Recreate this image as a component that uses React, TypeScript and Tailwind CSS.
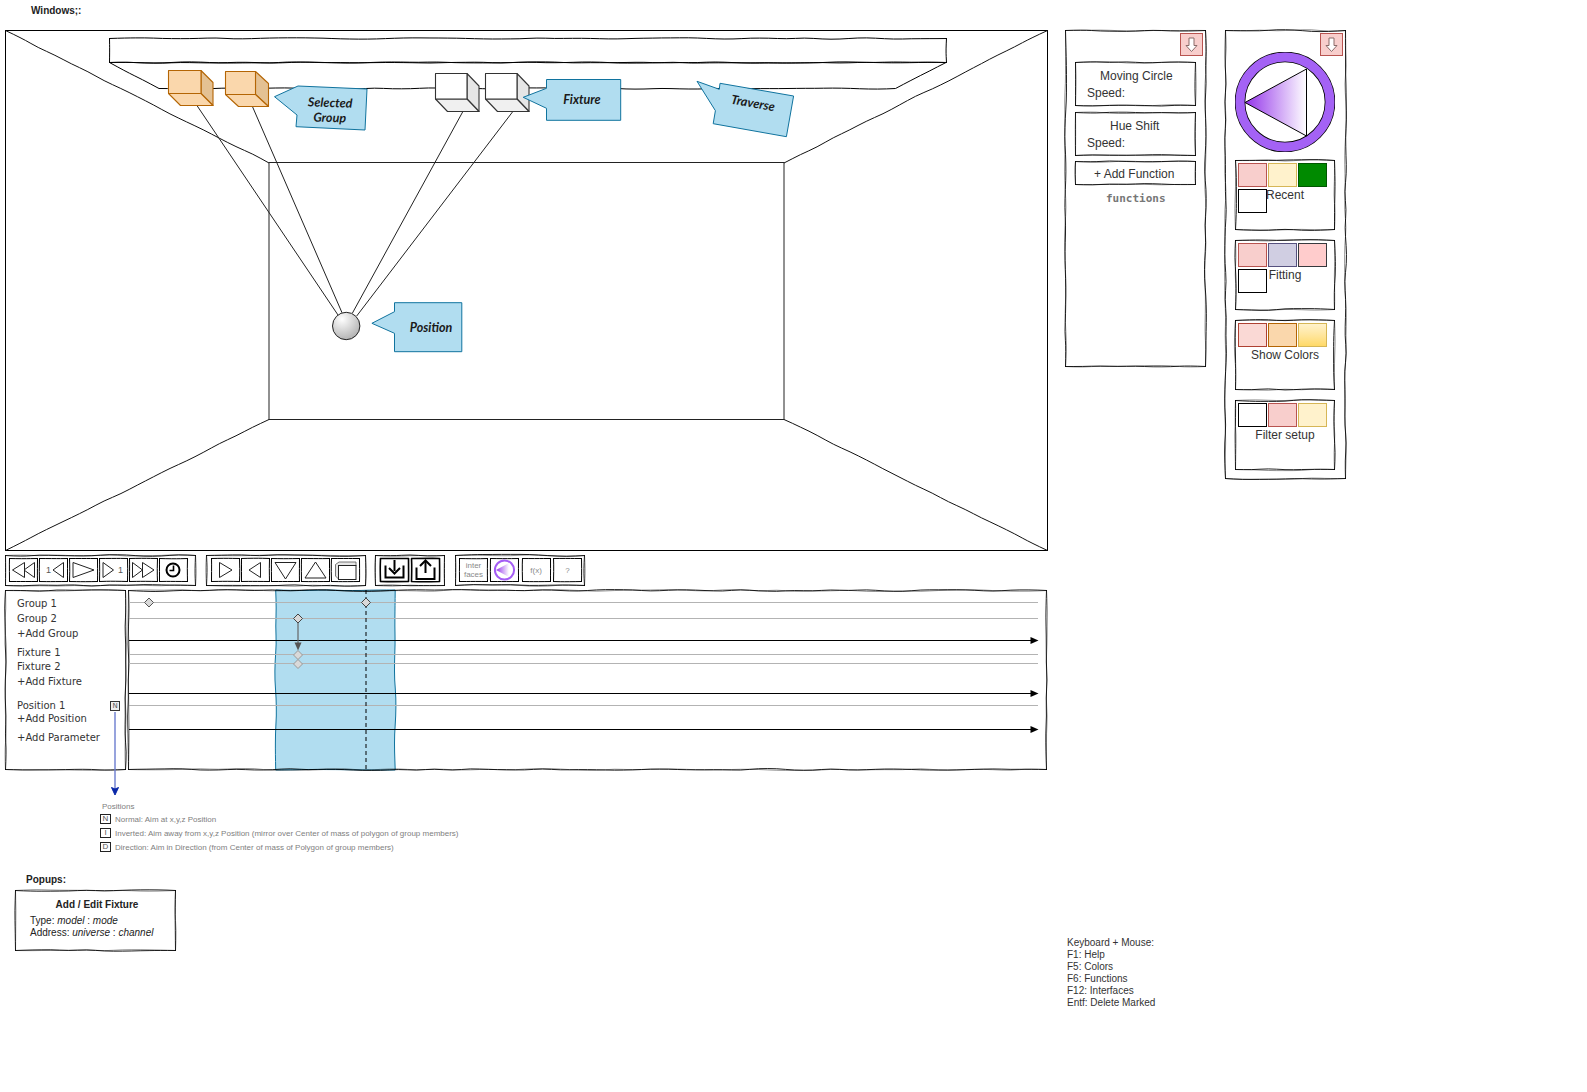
import type { ReactNode } from 'react';

// Little seeded generator so the sketchy lines come out the same on every render.
function makeRandom(seed: number) {
  let s = seed * 9301 + 49297;
  return () => {
    s = (s * 9301 + 49297) % 233280;
    return s / 233280 - 0.5;
  };
}

function wobble(x1: number, y1: number, x2: number, y2: number, seed: number, amp = 1.2, step = 18) {
  const rand = makeRandom(seed);
  const len = Math.hypot(x2 - x1, y2 - y1);
  const n = Math.max(2, Math.round(len / step));
  const nx = -(y2 - y1) / (len || 1);
  const ny = (x2 - x1) / (len || 1);
  const pts: [number, number][] = [];
  for (let i = 0; i <= n; i++) {
    const t = i / n;
    const off = i === 0 || i === n ? 0 : rand() * amp;
    pts.push([x1 + (x2 - x1) * t + nx * off, y1 + (y2 - y1) * t + ny * off]);
  }
  let d = `M${pts[0][0].toFixed(1)} ${pts[0][1].toFixed(1)}`;
  for (let i = 1; i < pts.length - 1; i++) {
    const mx = (pts[i][0] + pts[i + 1][0]) / 2;
    const my = (pts[i][1] + pts[i + 1][1]) / 2;
    d += `Q${pts[i][0].toFixed(1)} ${pts[i][1].toFixed(1)} ${mx.toFixed(1)} ${my.toFixed(1)}`;
  }
  d += `L${pts[pts.length - 1][0].toFixed(1)} ${pts[pts.length - 1][1].toFixed(1)}`;
  return d;
}

function rectPath(x: number, y: number, w: number, h: number, seed: number, amp = 1.2) {
  return [
    wobble(x - 0.4, y, x + w + 0.4, y, seed + 1, amp),
    wobble(x + w, y - 0.4, x + w, y + h + 0.4, seed + 2, amp),
    wobble(x + w + 0.4, y + h, x - 0.4, y + h, seed + 3, amp),
    wobble(x, y + h + 0.4, x, y - 0.4, seed + 4, amp),
  ].join('');
}

function SketchFrame({ w, h, seed, amp = 2.2 }: { w: number; h: number; seed: number; amp?: number }) {
  return (
    <svg className="absolute left-0 top-0 overflow-visible" width={w} height={h} fill="none" aria-hidden>
      <path d={rectPath(0.5, 0.5, w - 1, h - 1, seed, amp)} stroke="#000" strokeOpacity={0.85} strokeWidth={1} />
      <path d={rectPath(0.5, 0.5, w - 1, h - 1, seed + 17, amp)} stroke="#000" strokeOpacity={0.55} strokeWidth={0.8} />
    </svg>
  );
}

function Sketch({
  w,
  h,
  seed,
  className,
  children,
}: {
  w: number;
  h: number;
  seed: number;
  className: string;
  children?: ReactNode;
}) {
  return (
    <div className={`relative shrink-0 ${className}`}>
      <SketchFrame w={w} h={h} seed={seed} />
      <div className="relative h-full w-full">{children}</div>
    </div>
  );
}

function Cube({ x, y, fw, fh, dx, dy, fill, side, stroke }: { x: number; y: number; fw: number; fh: number; dx: number; dy: number; fill: string; side: string; stroke: string }) {
  return (
    <g stroke={stroke} strokeWidth={1.1} strokeLinejoin="round">
      <path d={`M${x + fw} ${y}L${x + fw + dx} ${y + dy}V${y + fh + dy}L${x + fw} ${y + fh}Z`} fill={side} />
      <path d={`M${x} ${y + fh}H${x + fw}L${x + fw + dx} ${y + fh + dy}H${x + dx}Z`} fill={side === '#e6e6e6' ? '#f0f0f0' : fill} />
      <rect x={x} y={y} width={fw} height={fh} fill={fill} />
    </g>
  );
}

function CalloutLabel({ className, children }: { className: string; children: ReactNode }) {
  return (
    <div
      className={`absolute -translate-x-1/2 -translate-y-1/2 whitespace-nowrap text-center font-['Lato',sans-serif] text-[12.5px] font-bold italic leading-[15px] text-[#1a1a1a] ${className}`}
    >
      {children}
    </div>
  );
}

function Scene() {
  const callout = { fill: '#b1ddf0', stroke: '#10739e', strokeWidth: 1 };
  return (
    <div className="relative h-[521px] w-[1043px]">
      <svg className="absolute left-0 top-0" width={1043} height={521} viewBox="5 30 1043 521" fill="none">
        <defs>
          <radialGradient id="sphere" cx="0.35" cy="0.25" r="0.9">
            <stop offset="0" stopColor="#ffffff" />
            <stop offset="1" stopColor="#a6a6a6" />
          </radialGradient>
        </defs>
        <rect x={5.5} y={30.5} width={1042} height={520} stroke="#000" />
        <path d={wobble(5.5, 30.5, 269, 163, 3, 1.6)} stroke="#111" />
        <path d={wobble(1047.5, 30.5, 784, 163, 5, 1.6)} stroke="#111" />
        <path d={wobble(5.5, 550.5, 269, 419.5, 7, 1.6)} stroke="#111" />
        <path d={wobble(1047.5, 550.5, 784, 419.5, 9, 1.6)} stroke="#111" />
        <rect x={269} y={162.5} width={515} height={257} stroke="#222" />

        <path d={rectPath(109.5, 38.5, 837, 24, 21, 1.5)} stroke="#000" />
        <path d={wobble(109.5, 62.5, 946, 62.5, 33, 1.5)} stroke="#000" />
        <path d={wobble(109.5, 62.5, 159, 88.5, 11, 0.8)} stroke="#000" />
        <path d={wobble(159, 88.5, 895.5, 88.5, 13, 1.5)} stroke="#000" />
        <path d={wobble(895.5, 88.5, 946, 62.5, 15, 0.8)} stroke="#000" />

        <path d="M196.8 105.3L338 315" stroke="#222" />
        <path d="M252.5 106.7L342 312.7" stroke="#222" />
        <path d="M463 111.3L352.3 313.3" stroke="#222" />
        <path d="M513 111.3L356.7 316" stroke="#222" />

        <Cube x={168.5} y={70.5} fw={32.5} fh={23} dx={12} dy={12} fill="#fad7ac" side="#e4c193" stroke="#b46504" />
        <Cube x={225.5} y={71.5} fw={30} fh={23} dx={13} dy={12} fill="#fad7ac" side="#e4c193" stroke="#b46504" />
        <Cube x={435.5} y={73.5} fw={31.5} fh={25.5} dx={12} dy={12.5} fill="#ffffff" side="#e6e6e6" stroke="#333" />
        <Cube x={485.5} y={73.5} fw={31.5} fh={25.5} dx={12} dy={12.5} fill="#ffffff" side="#e6e6e6" stroke="#333" />

        <circle cx={346.2} cy={326} r={13.7} fill="url(#sphere)" stroke="#222" />

        <path d="M274.5 96.7L298 86L367 89L365 130L296 126.7L297 115Z" {...callout} />
        <path d="M371.9 323.3L394.5 311.7V302.7H461.8V351.7H394.5V333.3Z" {...callout} />
        <path d="M523.2 97.3L546.5 88.3V79.5H620.7V120.3H546.5V108.3Z" {...callout} />
        <path d="M697 81.3L719.3 89.3L720 83.3L793.6 96L786.4 136.7L713.2 123.7L715.4 110.7Z" {...callout} />
      </svg>
      <CalloutLabel className="left-[325px] top-[80px] rotate-[2deg]">
        Selected
        <br />
        Group
      </CalloutLabel>
      <CalloutLabel className="left-[426px] top-[297px]">Position</CalloutLabel>
      <CalloutLabel className="left-[577px] top-[69px]">Fixture</CalloutLabel>
      <CalloutLabel className="left-[748px] top-[73px] rotate-[10deg]">Traverse</CalloutLabel>
    </div>
  );
}

function IconSvg({ children }: { children: ReactNode }) {
  return (
    <svg className="absolute left-0 top-0" width={29} height={24} viewBox="0 0 29 24" fill="none" stroke="#222" strokeWidth={1}>
      {children}
    </svg>
  );
}

function ToolButton({ seed, children, thick }: { seed: number; children?: ReactNode; thick?: boolean }) {
  return (
    <div className="relative h-[24px] w-[29px] shrink-0">
      <svg className="absolute left-0 top-0 overflow-visible" width={29} height={24} fill="none">
        <path d={rectPath(0.5, 0.5, 28, 23, seed, 0.8)} stroke="#000" strokeWidth={thick ? 1.6 : 1} />
      </svg>
      {children}
    </div>
  );
}

function Digit({ className }: { className: string }) {
  return <span className={`absolute top-[6px] text-[9px] leading-[12px] text-[#555] ${className}`}>1</span>;
}

function GrayLabel({ children }: { children: ReactNode }) {
  return (
    <div className="flex h-full w-full items-center justify-center text-center text-[8px] leading-[9px] text-[#8a8a8a]">
      {children}
    </div>
  );
}

function ToolBars() {
  return (
    <div className="mt-[4px] flex h-[31px] gap-[9.5px]">
      <Sketch w={191} h={31} seed={40} className="flex h-[31px] w-[191px]">
        <div className="flex items-center gap-[1px] pl-[4px] pt-[3px]">
          <ToolButton seed={41}>
            <IconSvg>
              <path d="M3.5 12L15.5 4.5V19.5ZM15 12L25.5 4.5V19.5Z" />
            </IconSvg>
          </ToolButton>
          <ToolButton seed={42}>
            <Digit className="left-[7px]" />
            <IconSvg>
              <path d="M14 12L24.5 4.5V19.5Z" />
            </IconSvg>
          </ToolButton>
          <ToolButton seed={43}>
            <IconSvg>
              <path d="M25 12L4 4.5V19.5Z" />
            </IconSvg>
          </ToolButton>
          <ToolButton seed={44}>
            <Digit className="left-[19px]" />
            <IconSvg>
              <path d="M14.5 12L4 4.5V19.5Z" />
            </IconSvg>
          </ToolButton>
          <ToolButton seed={45}>
            <IconSvg>
              <path d="M13.5 12L3.5 4.5V19.5ZM25 12L13.5 4.5V19.5Z" />
            </IconSvg>
          </ToolButton>
          <ToolButton seed={46}>
            <IconSvg>
              <circle cx={14} cy={12} r={6.5} stroke="#000" strokeWidth={2} />
              <path d="M14.5 7.5V12.5H10.5" stroke="#000" strokeWidth={1.6} />
            </IconSvg>
          </ToolButton>
        </div>
      </Sketch>
      <Sketch w={160} h={31} seed={50} className="flex h-[31px] w-[160px]">
        <div className="flex items-center gap-[1px] pl-[5px] pt-[3px]">
          <ToolButton seed={51}>
            <IconSvg>
              <path d="M21 12L8.5 4.5V19.5Z" />
            </IconSvg>
          </ToolButton>
          <ToolButton seed={52}>
            <IconSvg>
              <path d="M8 12L19.5 4.5V19.5Z" />
            </IconSvg>
          </ToolButton>
          <ToolButton seed={53}>
            <IconSvg>
              <path d="M4 4.5H25L14.5 21Z" />
            </IconSvg>
          </ToolButton>
          <ToolButton seed={54}>
            <IconSvg>
              <path d="M4 20H25L14.5 4Z" />
            </IconSvg>
          </ToolButton>
          <ToolButton seed={55}>
            <IconSvg>
              <path d="M4.5 6.5L8 4H25V8H8V21.5L4.5 18Z" stroke="#555" strokeWidth={0.8} fill="#e6e6e6" />
              <rect x={7.5} y={7.5} width={17.5} height={14} fill="#fff" stroke="#222" />
            </IconSvg>
          </ToolButton>
        </div>
      </Sketch>
      <Sketch w={70} h={31} seed={60} className="flex h-[31px] w-[70px]">
        <div className="flex items-center gap-[2px] pl-[5px] pt-[3px]">
          <ToolButton seed={61} thick>
            <IconSvg>
              <path d="M5.5 7.5V19.5H23.5V7.5" stroke="#000" strokeWidth={2} />
              <path d="M14.5 2V13" stroke="#000" strokeWidth={2} />
              <path d="M9 10L14.5 15.5L20 10" stroke="#000" strokeWidth={2} />
            </IconSvg>
          </ToolButton>
          <ToolButton seed={62} thick>
            <IconSvg>
              <path d="M5.5 9.5V21H23.5V9.5" stroke="#000" strokeWidth={2} />
              <path d="M14.5 3V15" stroke="#000" strokeWidth={2} />
              <path d="M9 8L14.5 2.5L20 8" stroke="#000" strokeWidth={2} />
            </IconSvg>
          </ToolButton>
        </div>
      </Sketch>
      <Sketch w={130} h={31} seed={70} className="flex h-[31px] w-[130.5px]">
        <div className="flex items-center gap-[2.3px] pl-[4.5px] pt-[3px]">
          <ToolButton seed={71}>
            <GrayLabel>
              inter
              <br />
              faces
            </GrayLabel>
          </ToolButton>
          <ToolButton seed={72}>
            <IconSvg>
              <circle cx={14.5} cy={12} r={9.6} stroke="#a45cf5" strokeWidth={2} />
              <path d="M6 12L19 5V19Z" fill="url(#wheelTriangle)" stroke="none" />
            </IconSvg>
          </ToolButton>
          <ToolButton seed={73}>
            <GrayLabel>f(x)</GrayLabel>
          </ToolButton>
          <ToolButton seed={74}>
            <GrayLabel>?</GrayLabel>
          </ToolButton>
        </div>
      </Sketch>
    </div>
  );
}

function Diamond({ x, y, stroke }: { x: number; y: number; stroke: string }) {
  return <path d={`M${x - 4.5} ${y}L${x} ${y - 4.5}L${x + 4.5} ${y}L${x} ${y + 4.5}Z`} fill="#d9d9d9" stroke={stroke} strokeWidth={1} />;
}

function Arrow({ y }: { y: number }) {
  return (
    <g>
      <path d={`M129 ${y}H1033`} stroke="#000" />
      <path d={`M1038.5 ${y}L1030.5 ${y - 3.5}V${y + 3.5}Z`} fill="#000" />
    </g>
  );
}

function TrackLabel({ className, children }: { className: string; children: ReactNode }) {
  return <div className={`pl-[12px] ${className}`}>{children}</div>;
}

function Timeline() {
  return (
    <div className="relative mt-[4px] flex h-[180px] gap-[2px]">
      <Sketch w={121} h={180} seed={80} className="h-[180px] w-[121px]">
        <div className="pt-[6px] font-['DejaVu_Sans',sans-serif] text-[10px] text-[#333]">
          <TrackLabel className="h-[15px] leading-[15px]">Group 1</TrackLabel>
          <TrackLabel className="h-[15px] leading-[15px]">Group 2</TrackLabel>
          <TrackLabel className="h-[15px] leading-[15px]">+Add Group</TrackLabel>
          <TrackLabel className="mt-[5px] h-[14px] leading-[14px]">Fixture 1</TrackLabel>
          <TrackLabel className="h-[14px] leading-[14px]">Fixture 2</TrackLabel>
          <TrackLabel className="h-[15px] leading-[15px]">+Add Fixture</TrackLabel>
          <div className="mt-[10px] flex h-[13px] items-center justify-between pl-[12px] pr-[6px] leading-[13px]">
            <span>Position 1</span>
            <span className="mt-[1px] flex h-[10px] w-[10px] items-center justify-center border border-[#333] bg-[#eee] text-[7px] leading-none text-[#555]">
              N
            </span>
          </div>
          <TrackLabel className="h-[13px] leading-[13px]">+Add Position</TrackLabel>
          <TrackLabel className="mt-[6px] h-[14px] leading-[14px]">+Add Parameter</TrackLabel>
        </div>
      </Sketch>
      <div className="relative h-[180px] w-[918px]">
        <svg className="absolute left-0 top-0 overflow-visible" width={918} height={180} viewBox="128 590 918 180" fill="none">
          <path
            d={`${wobble(275.7, 590, 395.2, 590, 91, 1.4)}${wobble(395.2, 590, 395.2, 770, 92, 1.8).replace('M', 'L')}${wobble(395.2, 770, 275.7, 770, 93, 1.4).replace('M', 'L')}${wobble(275.7, 770, 275.7, 590, 94, 1.8).replace('M', 'L')}Z`}
            fill="#b1ddf0"
            stroke="#10739e"
          />
          <path d={rectPath(128.5, 590.5, 918, 179, 95, 2.2)} stroke="#000" strokeOpacity={0.85} />
          <path d={rectPath(128.5, 590.5, 918, 179, 112, 2.2)} stroke="#000" strokeOpacity={0.55} strokeWidth={0.8} />
          {[602.5, 618.5, 654.5, 663.5, 705.5].map((y) => (
            <path key={y} d={`M129 ${y}H1038`} stroke="#b3b3b3" />
          ))}
          <Arrow y={640.5} />
          <Arrow y={693.5} />
          <Arrow y={729.5} />
          <path d="M366 590V770" stroke="#000" strokeDasharray="4 3" />
          <path d="M298 618V646" stroke="#666" strokeWidth={1.2} />
          <path d="M298 650.5L294.5 642.5H301.5Z" fill="#555" />
          <Diamond x={149} y={602.5} stroke="#555" />
          <Diamond x={366} y={602.5} stroke="#444" />
          <Diamond x={298} y={618.5} stroke="#444" />
          <Diamond x={298} y={655} stroke="#999" />
          <Diamond x={298} y={664} stroke="#999" />
        </svg>
      </div>
      <svg className="absolute left-[100px] top-[122px]" width={20} height={84} fill="none">
        <path d="M10 0V77" stroke="#6b7ccf" strokeWidth={1.4} />
        <path d="M10 83L6.5 75.5L10 77L13.5 75.5Z" fill="#0a28a8" stroke="#0a28a8" />
      </svg>
    </div>
  );
}

function PositionRow({ letter, children }: { letter: string; children: ReactNode }) {
  return (
    <div className="flex h-[14px] items-center gap-[4px]">
      <span className="-mt-[3px] flex h-[10px] w-[11px] items-center justify-center border border-[#222] text-[8px] leading-none text-[#555]">
        {letter}
      </span>
      <span>{children}</span>
    </div>
  );
}

function Notes() {
  return (
    <div className="ml-[95px] mt-[31px] text-[8px] text-[#808080]">
      <div className="h-[12px] pl-[2px] leading-[12px]">Positions</div>
      <PositionRow letter="N">Normal: Aim at x,y,z Position</PositionRow>
      <PositionRow letter="I">Inverted: Aim away from x,y,z Position (mirror over Center of mass of polygon of group members)</PositionRow>
      <PositionRow letter="D">Direction: Aim in Direction (from Center of mass of Polygon of group members)</PositionRow>
    </div>
  );
}

function Popups() {
  return (
    <div className="mt-[19px]">
      <div className="ml-[21px] h-[12px] text-[10px] font-bold leading-[12px] text-[#222]">Popups:</div>
      <Sketch w={161} h={61} seed={120} className="ml-[10px] mt-[4px] h-[61px] w-[161px]">
        <div className="pt-[9px] text-[10px] leading-[12px] text-[#222]">
          <div className="pl-[3px] text-center font-bold">Add / Edit Fixture</div>
          <div className="mt-[4px] pl-[15px]">
            Type: <em>model</em> : <em>mode</em>
          </div>
          <div className="pl-[15px]">
            Address: <em>universe</em> : <em>channel</em>
          </div>
        </div>
      </Sketch>
    </div>
  );
}

function DownButton() {
  return (
    <div className="relative h-[23px] w-[23px] border border-[#b85450] bg-[#f8cecc]">
      <svg className="absolute left-0 top-0" width={21} height={21} fill="#fff" stroke="#8a6a68" strokeWidth={1}>
        <path d="M8 4H13V11.5H16L10.5 17.5L5 11.5H8Z" />
      </svg>
    </div>
  );
}

function FunctionBox({ seed, title, speed, indent }: { seed: number; title: string; speed?: boolean; indent: string }) {
  return (
    <Sketch w={121} h={speed ? 44 : 24} seed={seed} className={`w-[121px] ${speed ? 'h-[44px]' : 'h-[24px]'}`}>
      <div className={`text-[12px] leading-[17px] text-[#333] ${indent}`}>{title}</div>
      {speed && <div className="pl-[12px] text-[12px] leading-[17px] text-[#333]">Speed:</div>}
    </Sketch>
  );
}

function FunctionsPanel() {
  return (
    <Sketch w={141} h={337} seed={130} className="h-[337px] w-[141px]">
      <div className="flex flex-col">
        <div className="flex w-full justify-end pr-[3px] pt-[3px]">
          <DownButton />
        </div>
        <div className="ml-[10px] mt-[6px]">
          <FunctionBox seed={131} title="Moving Circle" speed indent="pl-[25px] pt-[6px]" />
          <div className="mt-[6px]">
            <FunctionBox seed={132} title="Hue Shift" speed indent="pl-[35px] pt-[6px]" />
          </div>
          <div className="mt-[5px]">
            <FunctionBox seed={133} title="+ Add Function" indent="pt-[5px] pl-[19px]" />
          </div>
        </div>
        <div className="ml-[41px] mt-[7px] font-['DejaVu_Sans_Mono',monospace] text-[11px] font-bold leading-[14px] text-[#777]">functions</div>
      </div>
    </Sketch>
  );
}

function Swatch({ className }: { className: string }) {
  return <div className={`h-[24px] w-[29px] border ${className}`} />;
}

function PaletteBox({
  seed,
  name,
  swatches,
  blank,
  labelClass,
}: {
  seed: number;
  name: string;
  swatches: string[];
  blank?: boolean;
  labelClass: string;
}) {
  return (
    <Sketch w={100} h={70} seed={seed} className="h-[70px] w-[100px]">
      <div className="pl-[3px] pt-[3px]">
        <div className="flex gap-[1px]">
          {swatches.map((s) => (
            <Swatch key={s} className={s} />
          ))}
        </div>
        <div className={`grid pr-[3px] ${blank ? 'mt-[2px]' : ''}`}>
          {blank && <Swatch className="border-[#000] bg-white [grid-area:1/1]" />}
          <div className={`text-center text-[12px] leading-[14px] text-[#333] [grid-area:1/1] ${labelClass}`}>{name}</div>
        </div>
      </div>
    </Sketch>
  );
}

function ColorWheel() {
  return (
    <svg className="-mt-[4px]" width={100} height={100} viewBox="0 0 100 100">
      <defs>
        <linearGradient id="wheelTriangle" x1="0" x2="1" y1="0" y2="0">
          <stop offset="0" stopColor="#9333ea" />
          <stop offset="1" stopColor="#ffffff" />
        </linearGradient>
      </defs>
      <circle cx={50} cy={50} r={45} fill="none" stroke="#000" strokeWidth={10.6} />
      <circle cx={50} cy={50} r={45} fill="none" stroke="#a462f5" strokeWidth={9} />
      <path d="M10 50.5L71.5 17V84Z" fill="url(#wheelTriangle)" stroke="#000" />
    </svg>
  );
}

function ColorsPanel() {
  return (
    <Sketch w={121} h={449} seed={140} className="h-[449px] w-[121px]">
      <div className="flex flex-col">
        <div className="flex w-full justify-end pr-[3px] pt-[3px]">
          <DownButton />
        </div>
        <div className="ml-[10px]">
          <ColorWheel />
        </div>
        <div className="ml-[10px] mt-[8px] flex flex-col gap-[10px]">
          <PaletteBox
            seed={141}
            name="Recent"
            blank
            labelClass="-mt-[1px]"
            swatches={['border-[#b85450] bg-[#f8cecc]', 'border-[#d6b656] bg-[#fff2cc]', 'border-[#005700] bg-[#008a00]']}
          />
          <PaletteBox
            seed={142}
            name="Fitting"
            blank
            labelClass="-mt-[1px]"
            swatches={['border-[#b85450] bg-[#f8cecc]', 'border-[#56517e] bg-[#d0cee2]', 'border-[#36393d] bg-[#ffcccc]']}
          />
          <PaletteBox
            seed={143}
            name="Show Colors"
            labelClass="mt-[1px]"
            swatches={['border-[#ae4132] bg-[#fad9d5]', 'border-[#b46504] bg-[#fad7ac]', 'border-[#d6b656] bg-gradient-to-b from-[#fff2cc] to-[#ffd966]']}
          />
          <PaletteBox
            seed={144}
            name="Filter setup"
            labelClass="mt-[1px]"
            swatches={['border-[#000] bg-white', 'border-[#b85450] bg-[#f8cecc]', 'border-[#d6b656] bg-[#fff2cc]']}
          />
        </div>
      </div>
    </Sketch>
  );
}

export default function App() {
  return (
    <div className="flex h-[1092px] w-[1587px] overflow-hidden bg-white font-['Liberation_Sans',Arial,sans-serif]">
      <div className="ml-[5px] w-[1060px] shrink-0">
        <div className="h-[30px] pl-[26px] pt-[4px] text-[10px] font-bold leading-[13px] text-[#222]">Windows;:</div>
        <Scene />
        <ToolBars />
        <Timeline />
        <Notes />
        <Popups />
      </div>
      <div className="w-[290px] shrink-0 pt-[30px]">
        <div className="flex items-start gap-[19px]">
          <FunctionsPanel />
          <ColorsPanel />
        </div>
        <div className="ml-[2px] mt-[458px] text-[10px] leading-[12px] text-[#333]">
          <div>Keyboard + Mouse:</div>
          <div>F1: Help</div>
          <div>F5: Colors</div>
          <div>F6: Functions</div>
          <div>F12: Interfaces</div>
          <div>Entf: Delete Marked</div>
        </div>
      </div>
    </div>
  );
}
